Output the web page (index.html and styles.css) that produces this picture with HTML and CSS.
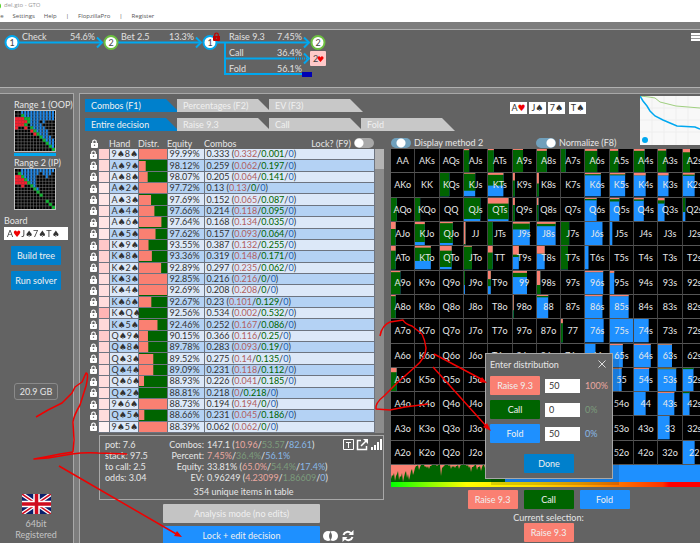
FILE: index.html
```html
<!doctype html>
<html lang="en">

<head>
    <meta charset="UTF-8">
    <title>del.gto - GTO</title>
    <link rel="stylesheet" href="styles.css">
</head>

<body>
    <svg class="sprites" width="0" height="0">
        <symbol id="lock" viewBox="0 0 8 10">
            <path d="M2 5V3a2 2 0 0 1 4 0v2" fill="none" stroke="currentColor" stroke-width="1.4" />
            <path d="M0 4.500h8V9q0 1-1 1H1q-1 0-1-1z" fill="currentColor" />
            <circle cx="4" cy="7" r=".8" fill="#636363" />
        </symbol>
    </svg>
    <header class="top">
        <div class="title"><i class="app-icon"></i>del.gto - GTO</div>
        <nav class="menu">
            <a href="#">File</a>
            <a href="#">Settings</a>
            <a href="#">Help</a>
            <span>|</span>
            <a href="#">FlopzillaPro</a>
            <span>|</span>
            <a href="#">Register</a>
        </nav>
    </header>

    <section class="tree">
        <svg class="tree-map" width="340" height="57" viewBox="0 30 340 57">
            <g class="line">
                <path d="M18 42.500h83M117 42.500h83M216 42.500h92M225 42v32h77M225 58.500h69" />
                <path d="M294 58.500h14" stroke-dasharray="1 1" />
                <path d="M97 37.500l5 5-5 5M196 37.500l5 5-5 5M304 37.500l5 5-5 5M304 53.500l5 5-5 5" />
            </g>
            <rect x="302" y="72" width="10" height="5" fill="#0000b4" />
            <g class="node">
                <circle class="p1" cx="12" cy="42.500" r="6.500" />
                <circle class="p2" cx="111" cy="42.500" r="6.500" />
                <circle class="p1" cx="210" cy="42.500" r="6.500" />
                <circle class="p2" cx="318" cy="42.500" r="6.500" />
                <text x="12" y="46">1</text>
                <text x="111" y="46">2</text>
                <text x="210" y="46">1</text>
                <text x="318" y="46">2</text>
            </g>
            <rect x="310" y="51" width="16" height="15" rx="1" fill="#ffc9c9" />
            <text x="313" y="62" fill="#444">2</text>
            <path d="M320.500 62l-3-3.500q-.5-2 1.400-2.200 1.200 0 1.600 1.200.4-1.200 1.600-1.200 1.900.2 1.400 2.200z" fill="#f00000" />
            <svg x="213" y="32" width="7" height="9" color="#c00000"><use href="#lock" /></svg>
            <g class="label">
                <text x="22" y="40">Check</text>
                <text class="end" x="95" y="40">54.6%</text>
                <text x="121" y="40">Bet 2.5</text>
                <text class="end" x="194" y="40">13.3%</text>
                <text x="229" y="40">Raise 9.3</text>
                <text class="end" x="302" y="40">7.45%</text>
                <text x="229" y="56">Call</text>
                <text class="end" x="302" y="56">36.4%</text>
                <text x="229" y="72">Fold</text>
                <text class="end" x="302" y="72">56.1%</text>
            </g>
        </svg>
        <button class="burger" aria-label="Menu"></button>
    </section>

    <div class="work">
        <aside class="side">
            <div class="range">
                <h2>Range 1 (OOP)</h2>
                <svg class="mini" id="range1" viewBox="0 0 39 39"></svg>
                <i class="range-mark"></i>
            </div>
            <div class="range">
                <h2>Range 2 (IP)</h2>
                <svg class="mini" id="range2" viewBox="0 0 39 39"></svg>
            </div>
            <label class="board-label" for="board">Board</label>
            <div class="board-box">
                <input class="board" id="board" value="A♥J♠7♠T♠">
            </div>
            <button class="btn act">Build tree</button>
            <button class="btn act">Run solver</button>
            <span class="memory">20.9 GB</span>
            <svg class="flag" viewBox="0 0 58 40" preserveAspectRatio="none">
                <rect width="58" height="40" fill="#0a1f6b" />
                <path d="M0 0l58 40M58 0L0 40" stroke="#fff" stroke-width="8" />
                <path d="M0 0l58 40M58 0L0 40" stroke="#d00a1e" stroke-width="3" />
                <path d="M29 0v40M0 20h58" stroke="#fff" stroke-width="13" />
                <path d="M29 0v40M0 20h58" stroke="#d00a1e" stroke-width="7" />
            </svg>
            <p class="license">64bit<br>Registered</p>
        </aside>

        <main class="main">
            <div class="tabs-area">
                <div class="tabs">
                    <button class="tab on">Combos (F1)</button>
                    <button class="tab">Percentages (F2)</button>
                    <button class="tab">EV (F3)</button>
                </div>
                <div class="tabs">
                    <button class="tab on">Entire decision</button>
                    <button class="tab">Raise 9.3</button>
                    <button class="tab">Call</button>
                    <button class="tab">Fold</button>
                </div>
            </div>
            <div class="cards">
                <span>A<i class="h">♥</i></span>
                <span>J<i>♠</i></span>
                <span>7<i>♠</i></span>
                <span class="turn">T<i>♠</i></span>
            </div>
            <svg class="graph" viewBox="0 0 60 49" preserveAspectRatio="none">
                <rect width="60" height="49" fill="#f8f8f8" />
                <path d="M12 0v49M24 0v49M36 0v49M48 0v49M0 12h60M0 24h60M0 36h60" stroke="#eee" />
                <path d="M0 0l9 1 6 1 5 4 8 2 8 2 12 1 12 1" fill="none" stroke="#9fcf7f" />
                <path d="M0 0l3 5 4 5 3 5 5 5 8 4 7 3 7 3 18 1 5 2" fill="none" stroke="#00a8f0" stroke-width="1.500" />
                <circle cx="5" cy="44" r="3" fill="#00a8f0" />
            </svg>

            <section class="combos">
                <table class="list">
                    <thead>
                        <tr>
                            <th class="c-lock"><svg class="lock"><use href="#lock" /></svg></th>
                            <th class="c-weight"></th>
                            <th class="c-hand">Hand</th>
                            <th class="c-distr">Distr.</th>
                            <th class="c-equity">Equity</th>
                            <th>
                                <div class="th-combos">Combos
                                    <label class="switch">Lock? (F9) <input type="checkbox"></label>
                                </div>
                            </th>
                            <th class="c-scroll"></th>
                        </tr>
                    </thead>
                    <tbody id="rows"></tbody>
                </table>
                <div class="stats">
                    <dl class="pot">
                        <div><dt>pot:</dt> <dd>7.6</dd></div>
                        <div><dt>stack:</dt> <dd>97.5</dd></div>
                        <div><dt>to call:</dt> <dd>2.5</dd></div>
                        <div><dt>odds:</dt> <dd>3.04</dd></div>
                    </dl>
                    <dl class="totals">
                        <dt>Combos:</dt>
                        <dd>147.1 (<b class="r">10.96</b>/<b class="g">53.57</b>/<b class="b">82.61</b>)</dd>
                        <dt>Percent:</dt>
                        <dd><b class="r">7.45%</b>/<b class="g">36.4%</b>/<b class="b">56.1%</b></dd>
                        <dt>Equity:</dt>
                        <dd>33.81% (<b class="r">65.0%</b>/<b class="g">54.4%</b>/<b class="b">17.4%</b>)</dd>
                        <dt>EV:</dt>
                        <dd>0.96249 (<b class="r">4.23099</b>/<b class="g">1.86609</b>/<b class="b">0</b>)</dd>
                    </dl>
                    <svg class="tools" width="39" height="12" viewBox="0 0 39 12">
                        <path d="M.5.500h10v10H.5zM3 3.500h5M5.500 3.500V9" fill="none" stroke="#fff" />
                        <path d="M18 1.500h-3.500v9h9V7M18 7l5-5" fill="none" stroke="#fff" stroke-width="1.500" />
                        <path d="M20 0h5v5z" fill="#fff" />
                        <path d="M28 8h2v3h-2zM31 6h2v5h-2zM34 3h2v8h-2zM37 0h2v11h-2z" fill="#fff" />
                    </svg>
                    <p class="unique">354 unique items in table</p>
                </div>
                <div class="modes">
                    <button class="btn mode">Analysis mode (no edits)</button>
                    <button class="btn mode fold">Lock + edit decision</button>
                    <svg class="mode-icons" width="32" height="12" viewBox="0 0 32 12">
                        <circle cx="5" cy="6" r="5" fill="#fff" />
                        <circle cx="10" cy="6" r="5" fill="#fff" />
                        <path d="M7.500 1.700q3 4.300 0 8.600q-3-4.300 0-8.600z" fill="#636363" />
                        <path d="M20.500 5a4.300 4.300 0 0 1 7.500-1.500M29.500 7a4.300 4.300 0 0 1-7.500 1.500" fill="none" stroke="#fff" stroke-width="2" />
                        <path d="M30.500 0v5h-5zM19.500 12V7h5z" fill="#fff" />
                    </svg>
                </div>
            </section>

            <div class="toolbar">
                <label class="switch mid"><input type="checkbox" checked> Display method 2</label>
                <label class="switch on"><input type="checkbox" checked> Normalize (F8)</label>
            </div>

            <section class="matrix-area">
                <div class="wide">
                    <div class="matrix" id="matrix"></div>
                    <svg class="histogram" id="histogram" viewBox="0 0 316 17" preserveAspectRatio="none"></svg>
                    <div class="heat"></div>
                </div>
                <div class="actions">
                    <button class="btn raise">Raise 9.3</button>
                    <button class="btn call">Call</button>
                    <button class="btn fold">Fold</button>
                </div>
                <p class="current">Current selection:</p>
                <div class="actions">
                    <button class="btn raise">Raise 9.3</button>
                </div>
            </section>
        </main>
    </div>

    <form class="dialog" role="dialog" aria-label="Enter distribution">
        <div class="dialog-head">
            <h2>Enter distribution</h2>
            <button class="close" type="button" aria-label="Close">
                <svg width="8" height="8" viewBox="0 0 8 8"><path d="M.5.500l7 7M7.500.500l-7 7" stroke="#ddd" /></svg>
            </button>
        </div>
        <div class="dist">
            <button class="btn raise" type="button">Raise 9.3</button>
            <input aria-label="Raise 9.3" value="50">
            <output class="r">100%</output>
        </div>
        <div class="dist">
            <button class="btn call" type="button">Call</button>
            <input aria-label="Call" value="0">
            <output class="g">0%</output>
        </div>
        <div class="dist">
            <button class="btn fold" type="button">Fold</button>
            <input aria-label="Fold" value="50">
            <output class="b">0%</output>
        </div>
        <button class="btn act done" type="button">Done</button>
    </form>

    <!-- hand-drawn notes over the window -->
    <svg class="notes" width="700" height="543" viewBox="0 0 700 543">
        <path d="M36 417L48 410 62 403 66 399 72 393 75 387 82 382 86 373Q89 373 86 386L80 405Q74 415 73 422L74 440 73 452 60 454 45 457 34 459 48 458 72 454Q85 452 98 453L127 454" />
        <path d="M59 466L178 535" />
        <path d="M380 336Q382 325 390 322L403 320Q405 324 412 326L422 334Q425 340 426 348 426 358 415 367L397 383 384 396Q375 403 376 409L390 410 405 407 428 404" />
        <path d="M434 354L483 380M433 367L487 427" />
        <path class="head" d="M182 537l-8-1 3-5zM487 383l-8-1 3-5zM491 431l-8-4 4-4z" />
    </svg>
    <script src="script.js"></script>
</body>

</html>
```

FILE: styles.css
```css
* {
    margin: 0;
    padding: 0;
    box-sizing: border-box;
}

html,
body {
    height: 100%;
    overflow: hidden;
}

body {
    position: relative;
    display: flex;
    flex-direction: column;
    background-color: #7d7d7d;
    color: #e6e6e6;
    font: 9px/11px Lato, "DejaVu Sans", sans-serif;
}

button,
input {
    border: 0;
    font: inherit;
    color: inherit;
}

h2 {
    font-size: 9px;
    font-weight: normal;
}

a {
    color: inherit;
    text-decoration: none;
}

i,
b {
    font-style: normal;
    font-weight: normal;
}

.sprites {
    position: absolute;
}

/* title and menu */
.top {
    height: 22px;
    background-color: #fff;
    color: #555;
    font: 6px/11px "Open Sans", sans-serif;
    white-space: nowrap;
}

.title {
    display: flex;
    align-items: center;
    color: #999;
}

.app-icon {
    width: 6px;
    height: 6px;
    margin-left: -5px;
    margin-right: 3px;
    border-radius: 50%;
    background-color: #4fd020;
}

.menu {
    display: flex;
    gap: 9px;
    margin-left: -6px;
}

/* decision tree */
.tree {
    display: flex;
    justify-content: space-between;
    height: 59px;
    margin-top: 7px;
    border-top: 1px solid #b0b0b0;
    border-bottom: 1px solid #b0b0b0;
    background-color: #636363;
}

.tree-map {
    font-size: 9px;
}

.line {
    fill: none;
    stroke: #00a8f0;
    stroke-width: 2;
}

.node circle {
    fill: #fff;
    stroke-width: 2;
}

.node .p1 {
    stroke: #00a8f0;
}

.node .p2 {
    stroke: #6cc040;
}

.node text {
    fill: #444;
    text-anchor: middle;
}

.label {
    fill: #e0e0e0;
}

.label .end {
    text-anchor: end;
}

.burger {
    width: 9px;
    height: 8px;
    margin-top: 3px;
    background: repeating-linear-gradient(#fff 0 2px, #999 2px 3px);
}

/* work area */
.work {
    flex: 1;
    display: grid;
    grid-template-columns: 74px minmax(0, 1fr);
    gap: 5px;
    margin-top: 5px;
}

.side,
.main {
    border-top: 1px solid #a8a8a8;
    background-color: #636363;
}

.side {
    display: flex;
    flex-direction: column;
    align-items: center;
    padding: 5px 5px 0 4px;
    border-right: 1px solid #a8a8a8;
}

.range {
    display: flex;
    flex-direction: column;
    align-self: flex-start;
    width: 42px;
    height: 58px;
    margin-left: 10px;
    white-space: nowrap;
}

.mini {
    width: 42px;
    height: 42px;
    border: 1px solid #c0c0c0;
    background-color: #000;
}

.range-mark {
    width: 42px;
    height: 3px;
    margin-top: 1px;
    background-color: #00a8f0;
}

.board-label {
    align-self: flex-start;
    margin-bottom: 1px;
}

.board-box {
    width: 100%;
    height: 13px;
    margin-bottom: 6px;
    background-color: #fff;
}

/* the second character, a heart, takes the red part of the gradient */
.board {
    display: block;
    width: 100%;
    height: 13px;
    padding: 0 3px;
    background: linear-gradient(90deg, #333 9px, #f00000 9px 17px, #333 17px);
    background-clip: text;
    -webkit-background-clip: text;
    color: transparent;
}

.h {
    color: #f00000;
}

.btn {
    width: 50px;
    height: 19px;
    border-radius: 1px;
    color: #f0f0f0;
    text-align: center;
    white-space: nowrap;
}

.act {
    background-color: #0080cc;
}

.side .btn {
    margin-bottom: 6px;
}

.raise {
    background-color: #fa8072;
}

.call {
    background-color: #006400;
}

.fold {
    background-color: #1e90ff;
}

.memory {
    margin: 87px 0 94px;
    padding: 2px 5px;
    border: 1px solid #8a8a8a;
    border-radius: 3px;
}

.flag {
    width: 29px;
    height: 20px;
    margin-bottom: 4px;
}

.license {
    color: #c4c4c4;
    text-align: center;
}

.main {
    display: grid;
    grid-template-columns: 306px minmax(0, 1fr) 60px;
    grid-template-rows: 40px 13px auto;
    padding: 2px 0 0 5px;
    border-left: 1px solid #a8a8a8;
    overflow: hidden;
}

.tabs-area {
    grid-area: 1 / 1 / 2 / 3;
    display: flex;
    flex-direction: column;
    gap: 6px;
    padding-top: 3px;
}

.tabs {
    display: flex;
}

.tab {
    width: 94px;
    height: 13px;
    margin-right: -2px;
    padding-left: 6px;
    background-color: #c8c8c8;
    color: #f0f0f0;
    line-height: 13px;
    text-align: left;
    clip-path: polygon(0 0, 81px 0, 100% 100%, 0 100%);
}

.tab.on {
    background-color: #0080cc;
}

.cards {
    grid-area: 1 / 2;
    display: flex;
    gap: 2px;
    padding: 6px 0 0 119px;
}

.cards span {
    height: 12px;
    width: 17px;
    background-color: #fff;
    color: #333;
    line-height: 12px;
    text-align: center;
    white-space: nowrap;
}

.cards .turn {
    margin-left: 2px;
}

.graph {
    grid-area: 1 / 3 / 3 / 4;
    width: 60px;
    height: 49px;
}

/* combos table */
.combos {
    grid-area: 2 / 1 / 4 / 2;
    margin-right: 7px;
    padding-top: 1px;
}

.list {
    width: 100%;
    height: 296px;
    border-collapse: collapse;
    table-layout: fixed;
}

.list th {
    height: 12px;
    font-weight: normal;
    text-align: left;
    white-space: nowrap;
}

.list td {
    border: 1px solid #6d7480;
    border-top: 0;
    color: #333;
    line-height: 10px;
    padding-left: 2px;
    white-space: nowrap;
}

.c-lock {
    width: 13px;
}

.c-weight {
    width: 11px;
}

.c-hand,
.c-distr {
    width: 29px;
}

.c-equity {
    width: 37px;
}

.c-scroll {
    width: 10px;
}

.lock {
    display: block;
    width: 7px;
    height: 9px;
    margin: 0 auto;
    color: #fff;
}

.list tbody .lock-cell {
    border: 0;
    padding: 0 0 0 5px;
}

.list .c-lock {
    padding-left: 5px;
}

.list tbody .scroll {
    border: 0;
    background: linear-gradient(#b4b4b4 20px, #8c8c8c 20px);
}

.list tr {
    background-color: #dce8f8;
}

.list tr:nth-child(even) {
    background-color: #b4d2f4;
}

.list thead tr,
.list .lock-cell {
    background-color: #636363;
}

.list .bar {
    padding: 0;
}

.bar svg {
    display: block;
    width: 100%;
    height: 10px;
}

.list .bar {
    background-color: #006400;
}

.th-combos {
    display: flex;
    justify-content: space-between;
}

.list .r {
    color: #b06060;
}

.list .g {
    color: #006400;
}

.list .b {
    color: #2060b0;
}

.switch {
    display: flex;
    align-items: center;
    gap: 3px;
    white-space: nowrap;
}

.switch input {
    appearance: none;
    width: 20px;
    height: 10px;
    border-radius: 5px;
    background: radial-gradient(circle at 5px 5px, #fff 4px, transparent 5px) #a8a8a8;
}

.switch.mid input {
    background: radial-gradient(circle at 10px 5px, #fff 4px, transparent 5px) #70a0bc;
}

.switch.on input {
    background: radial-gradient(circle at 15px 5px, #fff 4px, transparent 5px) #70a0bc;
}

/* totals */
.stats {
    display: grid;
    grid-template-columns: 59px 1fr 39px;
    margin: 2px 0 0 14px;
    padding: 3px 1px 2px 5px;
    border: 1px solid #a8a8a8;
    white-space: nowrap;
}

.pot dt,
.pot dd {
    display: inline;
}

.totals {
    display: grid;
    grid-template-columns: 40px 1fr;
    column-gap: 3px;
}

.totals dt {
    text-align: right;
}

.r {
    color: #eaa8a0;
}

.g {
    color: #7c9c7c;
}

.b {
    color: #88b8e8;
}

.unique {
    grid-column: 1 / 4;
    margin-top: 3px;
    text-align: center;
}

.modes {
    display: grid;
    grid-template-columns: 157px auto;
    justify-content: start;
    gap: 3px;
    align-items: center;
    margin: 4px 0 0 78px;
}

.mode {
    grid-column: 1;
    width: 100%;
    background-color: #c4c4c4;
}

.mode.fold {
    background-color: #1e90ff;
}

/* hand matrix */
.toolbar {
    grid-area: 2 / 2;
    display: grid;
    grid-template-columns: 145px auto;
    justify-content: start;
}

.matrix-area {
    grid-area: 3 / 2 / 4 / 4;
}

/* the last column runs past the window edge */
.wide {
    margin-right: -7px;
}

.matrix {
    display: grid;
    grid-template-columns: repeat(13, 1fr);
    grid-auto-rows: 1fr;
    aspect-ratio: 1;
    background-color: #000;
}

.cell {
    display: grid;
    place-items: center;
    border-right: 1px solid #444;
    border-bottom: 1px solid #555;
    color: #e8e8e8;
}

.cell svg,
.cell span {
    grid-area: 1 / 1;
}

.cell svg {
    width: 100%;
    height: 100%;
}

.histogram {
    display: block;
    width: 100%;
    height: 17px;
    background-color: #1e90ff;
}

.heat {
    height: 5px;
    background: linear-gradient(90deg, #0f0, #8f0 12%, #ff0 24%, #fd0 45%, #fa0 60%, #f60 75%, #f30 86%, #f00 88%);
}

.actions {
    display: flex;
    justify-content: center;
    gap: 6px;
    margin-right: -6px;
}

.wide + .actions {
    margin-top: 3px;
}

.current {
    margin: 3px -6px 0 0;
    text-align: center;
}

/* distribution dialog */
.dialog {
    position: absolute;
    left: 485px;
    top: 353px;
    display: flex;
    flex-direction: column;
    gap: 5px;
    width: 128px;
    padding: 3px 4px 5px;
    border: 1px solid #a8a8a8;
    background-color: #636363;
    box-shadow: 6px 6px 0 rgba(0, 0, 0, .15);
}

.dialog-head {
    display: flex;
    justify-content: space-between;
    align-items: center;
    height: 14px;
}

.close {
    width: 12px;
    height: 12px;
    background: none;
}

.close svg {
    display: block;
    margin: 2px;
}

.dist {
    display: flex;
    align-items: center;
    gap: 5px;
}

.dist input {
    width: 35px;
    height: 14px;
    padding-left: 4px;
    background-color: #fff;
    color: #333;
}

.done {
    align-self: center;
    margin-top: 6px;
}

.notes {
    position: absolute;
    left: 0;
    top: 0;
    fill: none;
    stroke: #f00000;
    stroke-width: 1.5;
    stroke-linejoin: round;
    pointer-events: none;
}

.notes .head {
    fill: #f00000;
    stroke: none;
}
```

FILE: script.js
```js
//hand, equity, total, raise, call
var combos = [
    ["9♠8♠", "99.99", "0.333", "0.332", "0.001"],
    ["A♠9♠", "98.12", "0.259", "0.062", "0.197"],
    ["A♠8♠", "98.07", "0.205", "0.064", "0.141"],
    ["A♠2♠", "97.72", "0.13", "0.13", "0"],
    ["A♠3♠", "97.69", "0.152", "0.065", "0.087"],
    ["A♠4♠", "97.66", "0.214", "0.118", "0.095"],
    ["A♠6♠", "97.64", "0.168", "0.134", "0.035"],
    ["A♠5♠", "97.62", "0.157", "0.093", "0.064"],
    ["K♠9♠", "93.55", "0.387", "0.132", "0.255"],
    ["K♠8♠", "93.36", "0.319", "0.148", "0.171"],
    ["K♠2♠", "92.89", "0.297", "0.235", "0.062"],
    ["K♠3♠", "92.85", "0.216", "0.216", "0"],
    ["K♠4♠", "92.69", "0.208", "0.208", "0"],
    ["K♠6♠", "92.67", "0.23", "0.101", "0.129"],
    ["K♠Q♠", "92.56", "0.534", "0.002", "0.532"],
    ["K♠5♠", "92.46", "0.252", "0.167", "0.086"],
    ["Q♠9♠", "90.15", "0.366", "0.116", "0.25"],
    ["Q♠8♠", "89.78", "0.283", "0.093", "0.19"],
    ["Q♠3♠", "89.52", "0.275", "0.14", "0.135"],
    ["Q♠4♠", "89.09", "0.231", "0.118", "0.112"],
    ["Q♠6♠", "88.93", "0.226", "0.041", "0.185"],
    ["Q♠2♠", "88.81", "0.218", "0", "0.218"],
    ["9♠6♠", "88.73", "0.194", "0.194", "0"],
    ["Q♠5♠", "88.66", "0.231", "0.045", "0.186"],
    ["9♠5♠", "88.39", "0.062", "0.062", "0"]
];
var html = "";
for (var i = 0; i < combos.length; i++) {
    var c = combos[i];
    var share = Math.round(c[3] / c[2] * 100);
    var tint = Math.round(250 - c[2] * 130);
    html += '<tr><td class="lock-cell"><svg class="lock"><use href="#lock"/></svg></td>' +
        '<td style="background-color:rgb(255,' + tint + ',' + tint + ')"></td>' +
        '<td>' + c[0] + '</td>' +
        '<td class="bar"><svg viewBox="0 0 100 10" preserveAspectRatio="none"><rect width="' + share + '" height="10" fill="#fa8072"/></svg></td>' +
        '<td>' + c[1] + '%</td>' +
        '<td>' + c[2] + ' (<b class="r">' + c[3] + '</b>/<b class="g">' + c[4] + '</b>/<b class="b">0</b>)</td>' +
        (i == 0 ? '<td class="scroll" rowspan="25"></td>' : '') + '</tr>';
}
document.getElementById("rows").innerHTML = html;

//width, raise height, call height in percent, the rest is fold
var hands = {
    AJs: [22, 5, 95], ATs: [25, 5, 95], A9s: [43, 4, 96], A8s: [42, 8, 92], A7s: [20, 0, 100],
    A6s: [52, 8, 92], A5s: [35, 8, 92], A4s: [45, 8, 92], A3s: [35, 7, 93], A2s: [30, 14, 86],
    KQs: [40, 0, 100], KJs: [48, 3, 73], KTs: [66, 8, 46], K9s: [8, 32, 68], K8s: [8, 45, 55],
    K6s: [68, 5, 5], K5s: [65, 6, 4], K4s: [50, 10, 0], K3s: [45, 10, 0], K2s: [50, 7, 5],
    AQo: [25, 0, 100], KQo: [22, 0, 100], QJs: [70, 0, 90], QTs: [88, 24, 67], Q9s: [8, 30, 70],
    Q8s: [6, 30, 70], Q6s: [50, 4, 6], Q5s: [40, 5, 10], Q4s: [42, 6, 6], Q3s: [28, 10, 14], Q2s: [10, 0, 60],
    AJo: [20, 30, 70], KJo: [42, 9, 77], QJo: [55, 5, 85], JJ: [6, 95, 5], JTs: [20, 0, 100],
    J9s: [72, 7, 25], J8s: [80, 8, 10], J7s: [35, 0, 100], J6s: [75, 0, 0], J5s: [10, 0, 0],
    ATo: [20, 20, 80], KTo: [68, 7, 57], QTo: [50, 20, 70], JTo: [34, 3, 97], TT: [20, 28, 72],
    T9s: [25, 37, 10], T8s: [33, 33, 0], T7s: [30, 0, 100], T6s: [15, 0, 0],
    A9o: [40, 5, 95], J9o: [4, 0, 60], T9o: [12, 35, 30], "99": [60, 8, 18], "98s": [14, 60, 40],
    "96s": [78, 5, 0], "95s": [18, 8, 0],
    A8o: [20, 5, 95], "98o": [3, 65, 35], "88": [48, 4, 6], "86s": [75, 5, 0], "85s": [80, 5, 0],
    "77": [8, 18, 82], "76s": [80, 0, 0], "75s": [100, 0, 0], "74s": [63, 0, 0],
    "66": [45, 0, 0], "65s": [55, 5, 0], "64s": [72, 4, 0], "63s": [60, 3, 0],
    A5o: [24, 18, 82], "55": [50, 3, 0], "54s": [65, 4, 0], "53s": [78, 2, 3], "52s": [45, 0, 5],
    "44": [50, 0, 0], "43s": [70, 4, 0], "42s": [28, 0, 5], "33": [50, 0, 0], "22": [50, 0, 0]
};
var ranks = "AKQJT98765432";
html = "";
for (var y = 0; y < 13; y++) {
    for (var x = 0; x < 13; x++) {
        var name = x == y ? ranks[x] + ranks[x] : x > y ? ranks[y] + ranks[x] + "s" : ranks[x] + ranks[y] + "o";
        var h = hands[name];
        html += '<div class="cell">';
        if (h) {
            html += '<svg viewBox="0 0 100 100" preserveAspectRatio="none">' +
                '<rect width="' + h[0] + '" height="100" fill="#1e90ff"/>' +
                '<rect width="' + h[0] + '" height="' + (h[1] + h[2]) + '" fill="#006400"/>' +
                '<rect width="' + h[0] + '" height="' + h[1] + '" fill="#fa8072"/></svg>';
        }
        html += '<span>' + name + '</span></div>';
    }
}
document.getElementById("matrix").innerHTML = html;

//small range pictures: one letter per hand
var range1 = [
    "..bbbbbbbbbbb",
    "..gbbbbbbbbbb",
    "rrrggbbbbbbbb",
    "rrrrgbbb.b...",
    "rrrg.bbbb....",
    "r..r.gbbbb...",
    ".....rgbbbb..",
    "......rgbbb..",
    "........gbbb.",
    ".........gbbb",
    "..........gbb",
    "...........gb",
    "............g"
];
var range2 = [
    "..bbbbbbbbbbb",
    ".gbbbbbb.bbb.",
    "rrgbbbb...b..",
    "rrrgbbb......",
    "rrrrgbb......",
    "..r..gb......",
    "......gb.....",
    ".......g.....",
    "........g....",
    ".............",
    "..........g..",
    "...........g.",
    "............g"
];
var fills = { r: "#f02030", g: "#10b030", b: "#2088e8" };

function drawRange(id, rows) {
    var s = "";
    for (var k = 1; k < 13; k++) {
        s += '<path d="M' + k * 3 + ' 0v39M0 ' + k * 3 + 'h39" stroke="#808080" stroke-width=".5"/>';
    }
    for (var y = 0; y < 13; y++) {
        for (var x = 0; x < 13; x++) {
            var f = fills[rows[y][x]];
            if (f) {
                s += '<rect x="' + x * 3 + '" y="' + y * 3 + '" width="' + (f == fills.b ? 2 : 3) + '" height="3" fill="' + f + '"/>';
            }
        }
    }
    document.getElementById(id).innerHTML = s;
}
drawRange("range1", range1);
drawRange("range2", range2);

//call area with raise spikes hanging from the top
var spikes = [14, 11, 16, 9, 15, 12, 17, 8, 13, 15, 6, 10, 3, 1, 5, 0, 0, 2, 3, 4, 1, 0, 0, 1, 0, 11, 2, 0, 0, 1, 4, 2, 3, 1, 4, 0, 0, 0, 1, 3, 7, 2, 0, 5, 2, 6, 0, 3];
var points = "M0 0";
for (var n = 0; n < spikes.length; n++) {
    points += "L" + n * 2 + " " + spikes[n] + "L" + (n * 2 + 1) + " " + Math.round(spikes[n] * (n < 12 ? .7 : .3));
}
document.getElementById("histogram").innerHTML = '<path d="M0 0h104v17H0z" fill="#006400"/>' +
    '<path d="M104 14h10v3h-10z" fill="#006400"/><path d="' + points + 'L96 0z" fill="#fa8072"/>';
```
